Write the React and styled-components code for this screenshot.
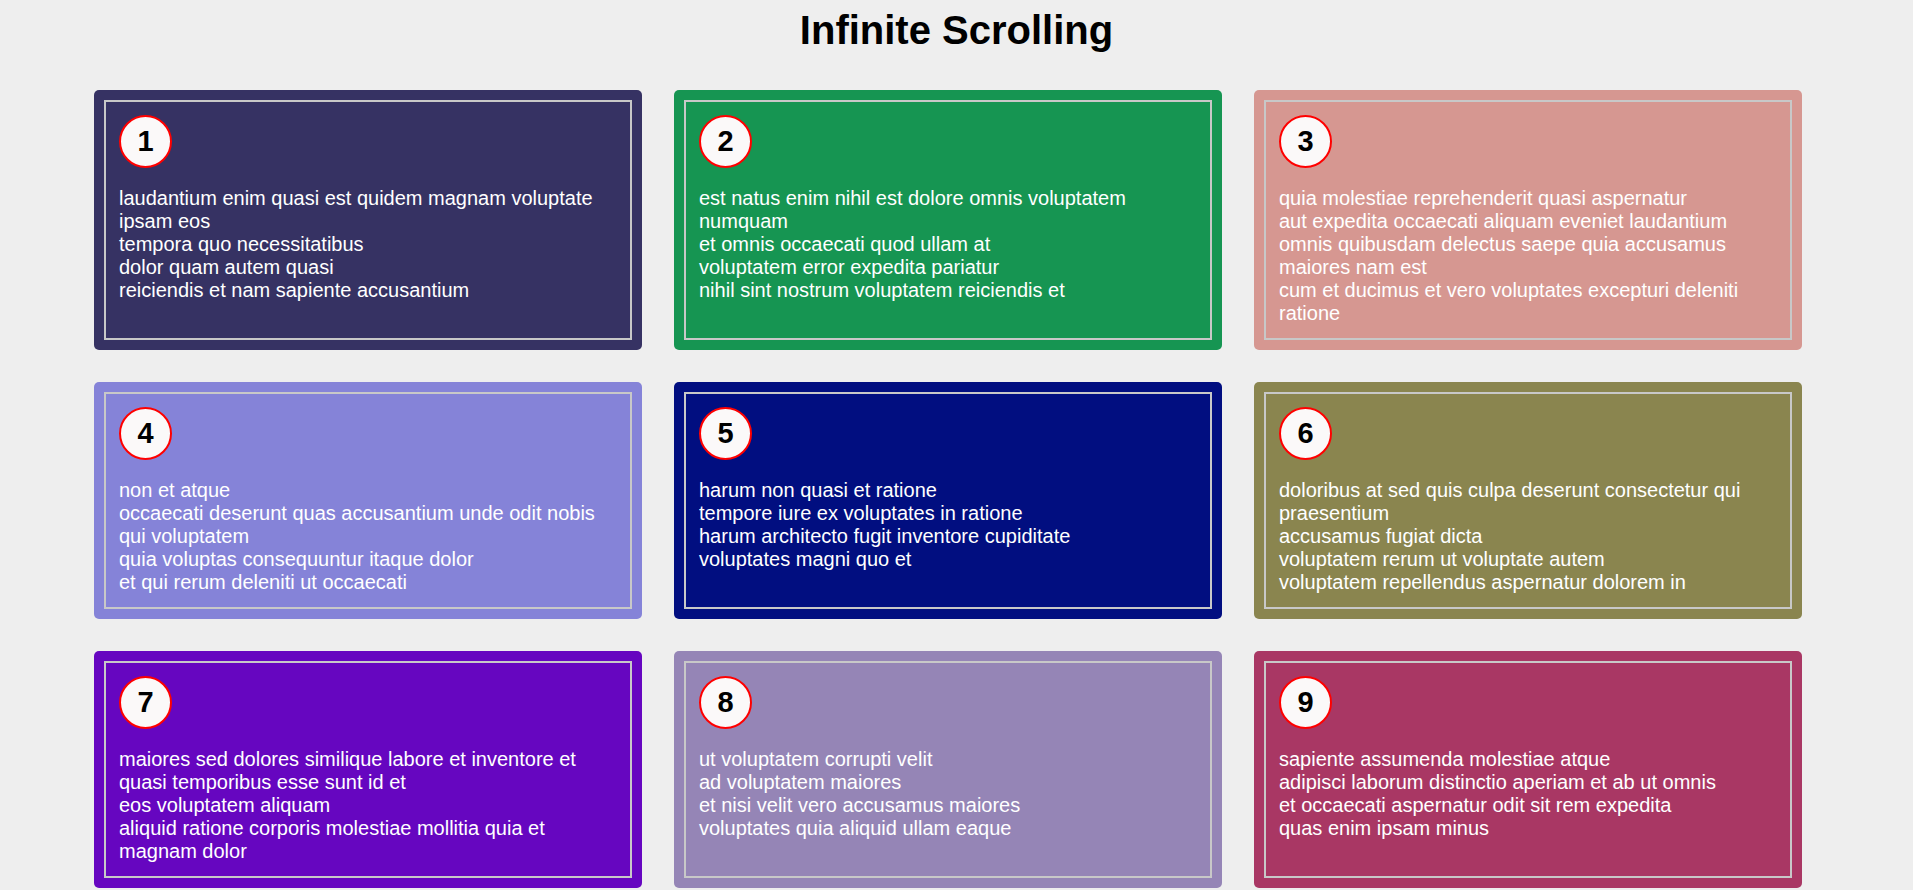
import React from 'react';
import styled, { createGlobalStyle } from 'styled-components';

const GlobalStyle = createGlobalStyle`
  html, body {
    margin: 0;
    padding: 0;
    background: #eeeeee;
    font-family: "Liberation Sans", Arial, sans-serif;
  }
  * {
    box-sizing: border-box;
  }
`;

const Page = styled.div`
  padding: 8px 0 40px;
`;

const Title = styled.h1`
  margin: 0 0 37px;
  text-align: center;
  font-size: 40px;
  font-weight: bold;
  color: #000;
`;

// leaves room on the right like the page scrollbar in the screenshot
const GridWrap = styled.div`
  padding-right: 17px;
`;

const Grid = styled.div`
  width: 1708px;
  margin: 0 auto;
  display: grid;
  grid-template-columns: repeat(3, 1fr);
  gap: 32px;
`;

const Card = styled.div`
  display: flex;
  padding: 10px;
  border-radius: 5px;
  background: ${props => props.color};
`;

const Inner = styled.div`
  flex: 1;
  border: 2px solid #c8c8c8;
  padding: 13px;
`;

const Badge = styled.div`
  width: 53px;
  height: 53px;
  border: 2px solid #ff0000;
  border-radius: 50%;
  background: #fbf9f9;
  display: flex;
  align-items: center;
  justify-content: center;
  font-size: 29px;
  font-weight: bold;
  color: #000;
`;

const Body = styled.p`
  margin: 19px 0 0;
  white-space: pre-line;
  font-size: 20px;
  line-height: 23px;
  color: #fff;
`;

const comments = [
  {
    id: 1,
    color: '#363263',
    body: 'laudantium enim quasi est quidem magnam voluptate ipsam eos\ntempora quo necessitatibus\ndolor quam autem quasi\nreiciendis et nam sapiente accusantium'
  },
  {
    id: 2,
    color: '#169552',
    body: 'est natus enim nihil est dolore omnis voluptatem numquam\net omnis occaecati quod ullam at\nvoluptatem error expedita pariatur\nnihil sint nostrum voluptatem reiciendis et'
  },
  {
    id: 3,
    color: '#d69791',
    body: 'quia molestiae reprehenderit quasi aspernatur\naut expedita occaecati aliquam eveniet laudantium\nomnis quibusdam delectus saepe quia accusamus maiores nam est\ncum et ducimus et vero voluptates excepturi deleniti ratione'
  },
  {
    id: 4,
    color: '#8583d8',
    body: 'non et atque\noccaecati deserunt quas accusantium unde odit nobis qui voluptatem\nquia voluptas consequuntur itaque dolor\net qui rerum deleniti ut occaecati'
  },
  {
    id: 5,
    color: '#010e80',
    body: 'harum non quasi et ratione\ntempore iure ex voluptates in ratione\nharum architecto fugit inventore cupiditate\nvoluptates magni quo et'
  },
  {
    id: 6,
    color: '#8a854f',
    body: 'doloribus at sed quis culpa deserunt consectetur qui praesentium\naccusamus fugiat dicta\nvoluptatem rerum ut voluptate autem\nvoluptatem repellendus aspernatur dolorem in'
  },
  {
    id: 7,
    color: '#6606c0',
    body: 'maiores sed dolores similique labore et inventore et\nquasi temporibus esse sunt id et\neos voluptatem aliquam\naliquid ratione corporis molestiae mollitia quia et magnam dolor'
  },
  {
    id: 8,
    color: '#9585b6',
    body: 'ut voluptatem corrupti velit\nad voluptatem maiores\net nisi velit vero accusamus maiores\nvoluptates quia aliquid ullam eaque'
  },
  {
    id: 9,
    color: '#a93764',
    body: 'sapiente assumenda molestiae atque\nadipisci laborum distinctio aperiam et ab ut omnis\net occaecati aspernatur odit sit rem expedita\nquas enim ipsam minus'
  },
  {
    id: 10,
    color: '#3c8a9e',
    body: 'voluptate iusto quis nobis reprehenderit ipsum amet nulla\nquia quas dolores velit et non\naut quia necessitatibus\nnostrum quaerat nulla et accusamus nisi facilis'
  },
  {
    id: 11,
    color: '#b2673a',
    body: 'ut dolorum nostrum id quia aut est\nfuga est inventore vel eligendi explicabo quis consectetur\naut occaecati repellat id natus quo est\nut blanditiis quia ut vel ut maiores ea'
  },
  {
    id: 12,
    color: '#4f6b2d',
    body: 'expedita maiores dignissimos facilis\nipsum est rem est fugit velit sequi\neum odio dolores dolor totam\noccaecati ratione eius rem velit'
  }
];

export default function App() {
  return (
    <Page>
      <GlobalStyle />
      <Title>Infinite Scrolling</Title>
      <GridWrap>
        <Grid>
          {comments.map(c => (
            <Card key={c.id} color={c.color}>
              <Inner>
                <Badge>{c.id}</Badge>
                <Body>{c.body}</Body>
              </Inner>
            </Card>
          ))}
        </Grid>
      </GridWrap>
    </Page>
  );
}
